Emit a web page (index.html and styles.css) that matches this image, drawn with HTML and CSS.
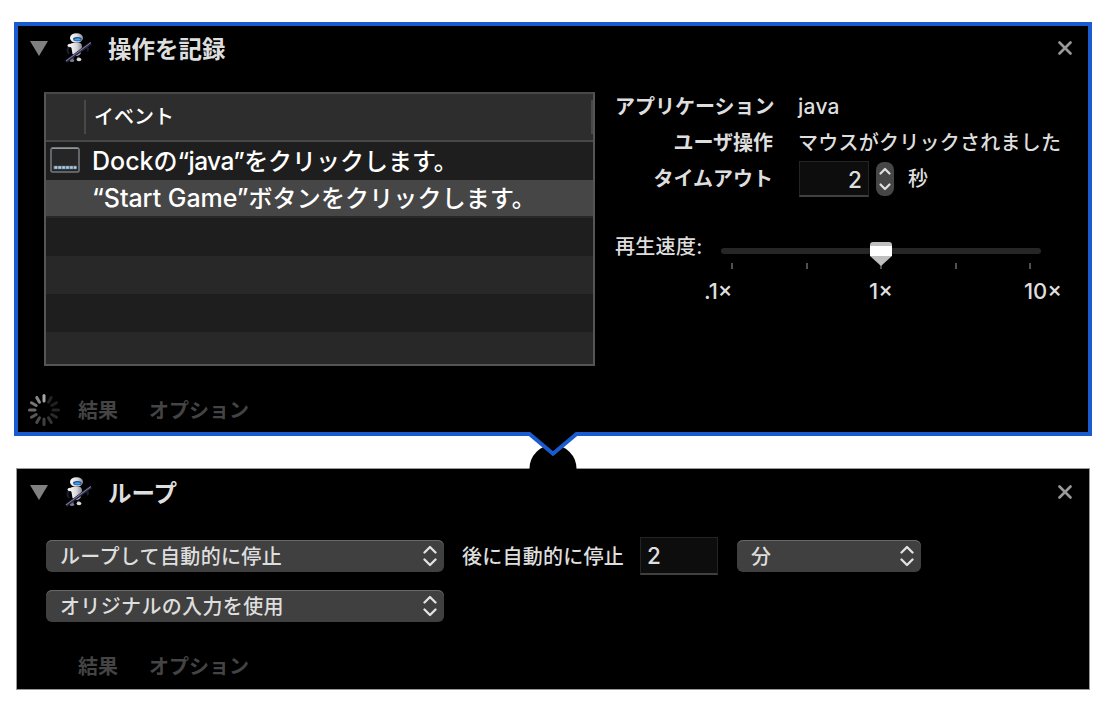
FILE: index.html
```
<!DOCTYPE html>
<html lang="ja">
<head>
<meta charset="utf-8">
<title>Automator</title>
<link rel="stylesheet" href="styles.css">
</head>
<body>
<svg width="0" height="0" class="defs">
  <defs>
    <linearGradient id="shell" x1="0" x2="1"><stop offset="0" stop-color="#fff"/><stop offset=".6" stop-color="#d4d4da"/><stop offset="1" stop-color="#8b8b96"/></linearGradient>
    <symbol id="robot" viewBox="0 0 28 32">
      <path d="M4 14Q1 18 4 22M20 15Q25 16 22 19" fill="none" stroke="#1c1e30" stroke-width="2"/>
      <path d="M8 24L7 28M13 25L14 28" stroke="#555969" stroke-width="2.500"/>
      <ellipse cx="7" cy="28.500" rx="2.200" ry="1.500" fill="#777b8a"/><ellipse cx="14" cy="27.500" rx="2.400" ry="1.800" fill="#d8d8df"/>
      <path d="M4 13Q7 10 12 11Q17 10 17 15L15.500 22Q11 26 7.500 22L6.500 16Z" fill="url(#shell)"/>
      <ellipse cx="5" cy="13.500" rx="2.500" ry="1.800" fill="#eee"/>
      <ellipse cx="11.500" cy="6" rx="6.500" ry="4.800" fill="url(#shell)"/>
      <path d="M8 6.200Q12 3.800 16.500 6V8.500Q12 10 8.500 8.500Z" fill="#174e94"/>
      <path d="M9.500 7Q12.500 5.600 15.500 7V8Q12 9 9.500 8Z" fill="#42a5ef"/>
      <path d="M1 29.500L26 11" stroke="#252744" stroke-width="2.800"/>
      <path d="M1 29L26 10.500" stroke="#85889f" stroke-width="1"/>
    </symbol>
    <symbol id="updown" viewBox="0 0 14 22"><path d="M1.500 7.500L7 2L12.500 7.500M1.500 14.500L7 20L12.500 14.500" fill="none" stroke="#e2e2e2" stroke-width="2.300" stroke-linecap="round" stroke-linejoin="round"/></symbol>
    <symbol id="close" viewBox="0 0 14 14"><path d="M1.500 1.500L12.500 12.500M12.500 1.500L1.500 12.500" stroke="#999" stroke-width="2.600" stroke-linecap="round"/></symbol>
  </defs>
</svg>
<main class="workflow">
  <section class="action selected">
    <header class="head">
      <svg class="disclosure" viewBox="0 0 18 15"><path d="M0 0H18L9 15Z" fill="#808080"/></svg>
      <svg class="robot"><use href="#robot"/></svg>
      <h2>操作を記録</h2>
      <svg class="close"><use href="#close"/></svg>
    </header>
    <div class="record">
      <div class="events">
        <div class="cols"><span class="col-icon"></span><span class="col-name">イベント</span></div>
        <div class="row first">
          <svg class="dock" viewBox="0 0 30 26"><rect x="1" y="1" width="28" height="24" rx="1.500" fill="#262626" stroke="#72797d" stroke-width="1.600"/><path d="M2 1.200H28" stroke="#a4b0b5"/><path d="M3.500 20.500H26.500" stroke="#65717b" stroke-width="3.500"/><path d="M4.500 20.500H26.500" stroke="#a6cdec" stroke-width="2.600" stroke-dasharray="2.600 1.300"/></svg>
          <span class="event"><span class="dock-word">Dock</span>の<span class="java-word">“java”</span>をクリックします。</span>
        </div>
        <div class="row current"><span class="event"><span class="start-word">“Start Game”</span>ボタンをクリックします。</span></div>
        <div class="row"></div>
        <div class="row alt"></div>
        <div class="row"></div>
        <div class="row alt last"></div>
      </div>
      <div class="details">
        <dl class="props">
          <dt>アプリケーション</dt><dd class="app-name">java</dd>
          <dt>ユーザ操作</dt><dd>マウスがクリックされました</dd>
          <dt>タイムアウト</dt>
          <dd class="timeout"><span class="field right">2</span>
            <svg class="stepper" viewBox="0 0 18 34"><rect width="18" height="34" rx="8" fill="#464646"/><path d="M4.500 11.500L9 7L13.500 11.500M4.500 22.500L9 27L13.500 22.500" fill="none" stroke="#e0e0e0" stroke-width="2.200" stroke-linecap="round" stroke-linejoin="round"/></svg>
            <span>秒</span></dd>
        </dl>
        <div class="speed">
          <span class="speed-label">再生速度:</span>
          <div class="slider">
            <svg viewBox="0 0 320 30">
              <rect y="8" width="320" height="6" rx="3" fill="#262626"/>
              <path d="M11 23V29M86 23V29M160 23V29M235 23V29M309 23V29" stroke="#505050" stroke-width="2"/>
              <path d="M149 5Q149 2 152 2H168Q171 2 171 5V16L160 26L149 16Z" fill="#bfbfbf"/>
              <path d="M149 6H171V16H149Z" fill="#fff"/>
            </svg>
            <div class="scale"><span>.1×</span><span>1×</span><span>10×</span></div>
          </div>
        </div>
      </div>
    </div>
    <footer class="foot">
      <svg class="spinner" viewBox="-16 -16 32 32">
        <g stroke-width="3" stroke-linecap="round">
          <path d="M0-9V-14.500" stroke="#a5a5a5"/>
          <path d="M0-9V-14.500" stroke="#222" transform="rotate(30)"/>
          <path d="M0-9V-14.500" stroke="#202020" transform="rotate(60)"/>
          <path d="M0-9V-14.500" stroke="#242424" transform="rotate(90)"/>
          <path d="M0-9V-14.500" stroke="#2b2b2b" transform="rotate(120)"/>
          <path d="M0-9V-14.500" stroke="#353535" transform="rotate(150)"/>
          <path d="M0-9V-14.500" stroke="#404040" transform="rotate(180)"/>
          <path d="M0-9V-14.500" stroke="#4c4c4c" transform="rotate(210)"/>
          <path d="M0-9V-14.500" stroke="#595959" transform="rotate(240)"/>
          <path d="M0-9V-14.500" stroke="#686868" transform="rotate(270)"/>
          <path d="M0-9V-14.500" stroke="#777" transform="rotate(300)"/>
          <path d="M0-9V-14.500" stroke="#888" transform="rotate(330)"/>
        </g>
      </svg>
      <span>結果</span><span>オプション</span>
    </footer>
  </section>

  <svg class="connector" viewBox="0 0 60 42">
    <circle cx="31" cy="38.500" r="23.500" fill="#000"/>
    <path d="M6 0V4L31 25L56 4V0Z" fill="#000"/>
    <path d="M0 4H7.500L31 23.700L54.500 4H60" fill="none" stroke="#1b5bd0" stroke-width="4"/>
  </svg>

  <section class="action plain">
    <header class="head">
      <svg class="disclosure" viewBox="0 0 18 15"><path d="M0 0H18L9 15Z" fill="#808080"/></svg>
      <svg class="robot"><use href="#robot"/></svg>
      <h2>ループ</h2>
      <svg class="close"><use href="#close"/></svg>
    </header>
    <div class="loop">
      <div class="line">
        <div class="popup wide"><span>ループして自動的に停止</span><svg><use href="#updown"/></svg></div>
        <span class="after">後に自動的に停止</span>
        <span class="field left">2</span>
        <div class="popup"><span>分</span><svg><use href="#updown"/></svg></div>
      </div>
      <div class="line"><div class="popup wide"><span>オリジナルの入力を使用</span><svg><use href="#updown"/></svg></div></div>
    </div>
    <footer class="foot"><span class="spinner"></span><span>結果</span><span>オプション</span></footer>
  </section>
</main>
</body>
</html>
```
FILE: styles.css
```
* { box-sizing: border-box; }
body {
  margin: 0;
  background: #fff;
  color: #dedede;
  font: 450 20px/30px Inter, "Noto Sans CJK JP", sans-serif;
}
svg { display: block; flex: none; }
.defs { position: absolute; }
.workflow {
  position: relative;
  width: 1107px;
  height: 714px;
  padding: 22px 15px 24px 14px;
  display: flex;
  flex-direction: column;
  gap: 32px;
}
.action { background: #000; display: flex; flex-direction: column; white-space: nowrap; }
.selected { height: 414px; border: 4px solid #1b5bd0; }
.plain { height: 222px; margin: 0 2px; border: 1px solid #999; }
.connector { position: absolute; left: 522px; top: 430px; width: 60px; height: 42px; }

.head { display: flex; align-items: center; height: 44px; padding: 0 16px 0 12px; }
.plain .head { height: 46px; padding: 0 17px 0 13px; }
.disclosure { width: 18px; height: 15px; margin-top: 1px; }
.robot { width: 28px; height: 32px; margin-left: 17px; margin-top: -1px; }
.head h2 { margin: 3px 0 0 15px; font-size: 23.5px; font-weight: 700; line-height: 32px; }
.close { width: 14px; height: 14px; margin-left: auto; }

.record { display: flex; margin: 22px 0 0 26px; }
.events { width: 551px; height: 274px; border: 2px solid #555; border-top-color: #484848; background: #1e1e1e; color: #fff; }
.cols { display: flex; align-items: center; height: 48px; border-bottom: 2px solid #484848; background: #2d2d2d; }
.col-icon { width: 40px; height: 34px; border-right: 2px solid #484848; }
.col-name { flex: 1; height: 34px; padding-left: 8px; line-height: 34px; border-right: 2px solid #484848; }
.row { height: 38px; display: flex; align-items: center; background: #1e1e1e; }
.alt { background: #282828; }
.current { background: #464646; border-bottom: 2px solid #282828; }
.last { height: 32px; }
.dock { width: 30px; height: 26px; margin: -2px 0 0 4px; }
.event { padding: 1px 0 0 46px; font-size: 24px; line-height: 34px; letter-spacing: .15px; }
.first .event { padding: 0 0 0 12px; letter-spacing: 0; }
.dock-word { font-size: 25px; }
.java-word { font-size: 24.5px; letter-spacing: -.6px; }
.start-word { font-size: 25px; letter-spacing: -.05px; }

.details { margin-left: 20px; width: 460px; }
.props { margin: 1px 0 0; display: grid; grid-template-columns: 158px 1fr; column-gap: 24px; grid-auto-rows: 36px; line-height: 28px; }
.props dt { text-align: right; font-weight: 700; }
.props dd { margin: 0 0 0 1px; letter-spacing: .25px; }
.props .app-name { font-size: 21px; }
.timeout { display: flex; align-items: flex-start; }
.timeout > span:last-child { margin-left: 14px; }
.field { background: #0d0d0d; border: 1px solid #242424; border-bottom: 2px solid #404040; font-size: 22.5px; }
.right { width: 70px; height: 36px; margin: -4px 7px 0 1px; padding-right: 6px; text-align: right; line-height: 36px; }
.stepper { width: 18px; height: 34px; margin-top: -3px; }
.speed { display: flex; margin-top: 39px; }
.speed-label { width: 106px; line-height: 28px; margin-top: -7px; letter-spacing: .3px; }
.slider { width: 320px; }
.slider svg { width: 320px; height: 30px; }
.scale { display: grid; grid-template-columns: 1fr auto 1fr; margin: 6px -21px 0 -17px; font-size: 22px; }
.scale span:nth-child(2) { padding-right: 4px; }
.scale span:last-child { text-align: right; }

.foot { display: flex; align-items: center; color: #444; font-weight: 700; margin: auto 0 6px 10px; height: 32px; line-height: 32px; }
.plain .foot { margin: auto 0 7px 11px; }
.foot > span { padding-top: 1px; }
.spinner { width: 32px; height: 32px; margin-right: 18px; }
.foot span:last-child { margin-left: 31px; }

.loop { padding: 22px 0 0 29px; display: flex; flex-direction: column; gap: 12px; }
.line { display: flex; align-items: center; height: 38px; }
.popup { width: 184px; height: 32px; padding: 0 7px 0 14px; display: flex; align-items: center; justify-content: space-between; border-radius: 6px; background: #404040; box-shadow: inset 0 1px #686868; letter-spacing: .35px; }
.popup span { padding-top: 2px; }
.wide { width: 398px; }
.popup svg { width: 14px; height: 22px; }
.after { width: 178px; margin-left: 18px; padding-top: 2px; letter-spacing: .25px; }
.left { width: 78px; height: 38px; margin-right: 19px; padding-left: 6px; line-height: 36px; }
```
